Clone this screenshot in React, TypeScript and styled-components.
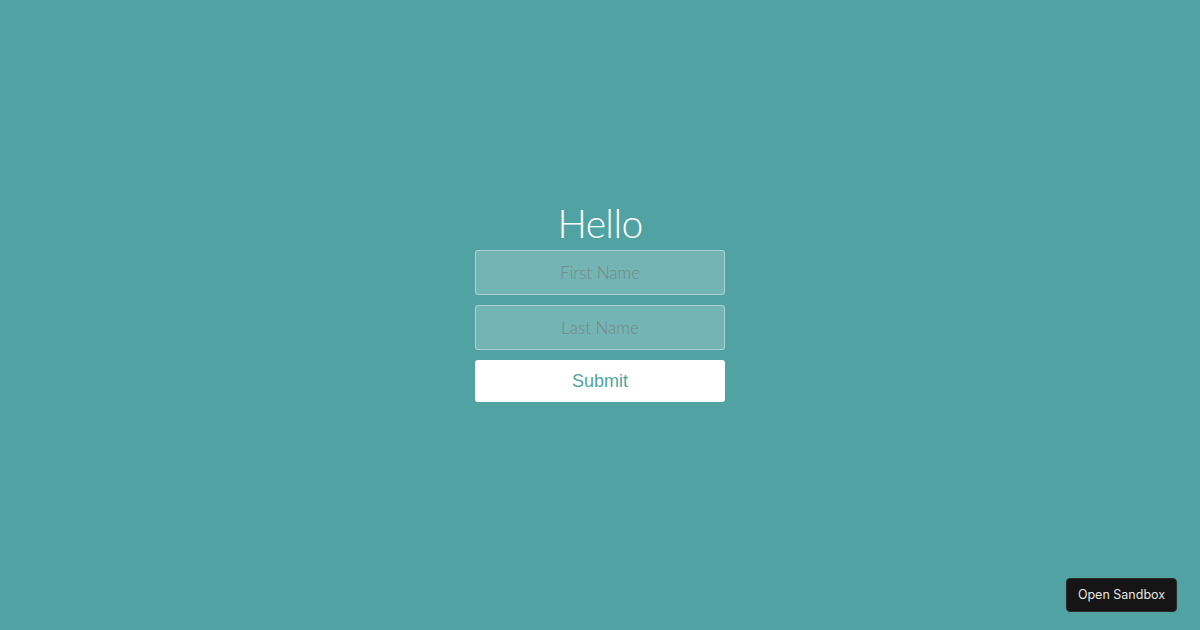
import React from "react";
import styled, { createGlobalStyle } from "styled-components";

const Global = createGlobalStyle`
  html, body { margin: 0; padding: 0; }
  body {
    background: #50a3a2;
    font-family: "Lato", "Open Sans", sans-serif;
    overflow: hidden;
  }
  * { box-sizing: border-box; }
`;

const Page = styled.div`
  width: 1200px;
  height: 630px;
  background: #50a3a2;
  display: flex;
  flex-direction: column;
  align-items: center;
  padding-top: 201px;
`;

const Title = styled.h1`
  margin: 0 0 5px;
  font-family: "Lato", "Open Sans", sans-serif;
  font-weight: 300;
  font-size: 39px;
  line-height: 44px;
  letter-spacing: -0.6px;
  color: #ffffff;
`;

const Form = styled.form`
  display: flex;
  flex-direction: column;
  align-items: center;
  gap: 10px;
`;

const Input = styled.input`
  width: 250px;
  height: 45px;
  padding: 0 15px;
  border: 1px solid rgba(255, 255, 255, 0.4);
  border-radius: 3px;
  background: rgba(255, 255, 255, 0.2);
  font-family: "Lato", "Open Sans", sans-serif;
  font-weight: 300;
  font-size: 17px;
  text-align: center;
  color: #ffffff;
  outline: none;
  &::placeholder {
    color: #788585;
    opacity: 1;
  }
`;

const SubmitButton = styled.button`
  width: 250px;
  height: 42px;
  padding: 0 15px;
  border: 0;
  border-radius: 3px;
  background: #ffffff;
  color: #50a3a2;
  font-family: "Liberation Sans", Arial, sans-serif;
  font-size: 18px;
  cursor: pointer;
`;

const SandboxButton = styled.a`
  position: fixed;
  right: 23px;
  bottom: 18px;
  width: 111px;
  height: 34px;
  display: flex;
  align-items: center;
  justify-content: center;
  background: #151515;
  border: 1px solid #2a2a2a;
  border-radius: 4px;
  color: #e6e6e6;
  font-family: "Inter", "Liberation Sans", sans-serif;
  font-size: 12.5px;
  padding-bottom: 1px;
  text-decoration: none;
`;

export default function App() {
  return (
    <>
      <Global />
      <Page>
        <Title>Hello</Title>
        <Form onSubmit={(e) => e.preventDefault()}>
          <Input type="text" placeholder="First Name" />
          <Input type="text" placeholder="Last Name" />
          <SubmitButton type="submit">Submit</SubmitButton>
        </Form>
      </Page>
      <SandboxButton href="#">Open Sandbox</SandboxButton>
    </>
  );
}
